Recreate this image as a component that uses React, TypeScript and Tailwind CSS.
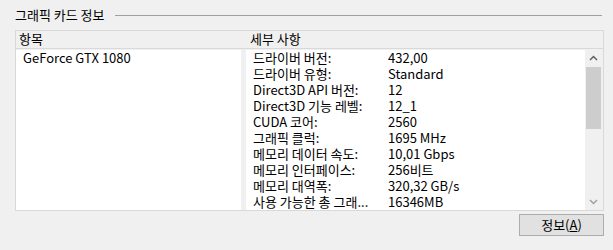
const ROWS: [string, string][] = [
  ["드라이버 버전:", "432,00"],
  ["드라이버 유형:", "Standard"],
  ["Direct3D API 버전:", "12"],
  ["Direct3D 기능 레벨:", "12_1"],
  ["CUDA 코어:", "2560"],
  ["그래픽 클럭:", "1695 MHz"],
  ["메모리 데이터 속도:", "10,01 Gbps"],
  ["메모리 인터페이스:", "256비트"],
  ["메모리 대역폭:", "320,32 GB/s"],
  ["사용 가능한 총 그래...", "16346MB"],
];

const FONT = "font-['Noto_Sans_CJK_KR','Noto_Sans',sans-serif]";

export default function App() {
  return (
    <div className={`w-[613px] h-[250px] bg-[#f0f0f0] text-[13px] text-black ${FONT} overflow-hidden`}>
      {/* group title */}
      <div className="flex items-center h-[16px] mt-[7px] pl-[15px] pr-[11px]">
        <span className="leading-[16px] whitespace-nowrap">그래픽 카드 정보</span>
        <div className="flex-1 h-px bg-[#a0a0a0] ml-[10px]" />
      </div>

      {/* list box */}
      <div className="ml-[15px] mt-[7px] w-[589px] h-[181px] border border-[#d9d9d9] flex flex-col">
        <div className="flex h-[18px] border-b border-[#d9d9d9] leading-[16px]">
          <div className="w-[230px] pl-[3px]">항목</div>
          <div className="pl-[4px]">세부 사항</div>
        </div>
        <div className="flex flex-1 pt-[1px]">
          <div className="w-[225px] bg-white pl-[7px] leading-[16px]">GeForce GTX 1080</div>
          <div className="w-[5px]" />
          <div className="w-[339px] bg-white pl-[7px]">
            {ROWS.map(([label, value]) => (
              <div key={label} className="flex h-[16px] leading-[16px] whitespace-nowrap">
                <span className="w-[135px]">{label}</span>
                <span>{value}</span>
              </div>
            ))}
          </div>
          {/* scrollbar */}
          <div className="w-[17px] flex flex-col items-center bg-[#f0f0f0]">
            <svg width="9" height="6" viewBox="0 0 9 6" className="mt-[5px]">
              <path d="M1 5 L4.5 1.5 L8 5" stroke="#606060" strokeWidth="1.5" fill="none" />
            </svg>
            <div className="mt-[6px] w-[15px] h-[62px] bg-[#cdcdcd]" />
            <div className="flex-1" />
            <svg width="9" height="6" viewBox="0 0 9 6" className="mb-[5px]">
              <path d="M1 1 L4.5 4.5 L8 1" stroke="#a0a0a0" strokeWidth="1.5" fill="none" />
            </svg>
          </div>
        </div>
      </div>

      {/* button */}
      <div className="flex justify-end pr-[9px] mt-[3px]">
        <button className="w-[85px] h-[22px] bg-[#e1e1e1] border border-[#adadad] leading-[18px]">
          정보(<span className="underline">A</span>)
        </button>
      </div>
    </div>
  );
}
